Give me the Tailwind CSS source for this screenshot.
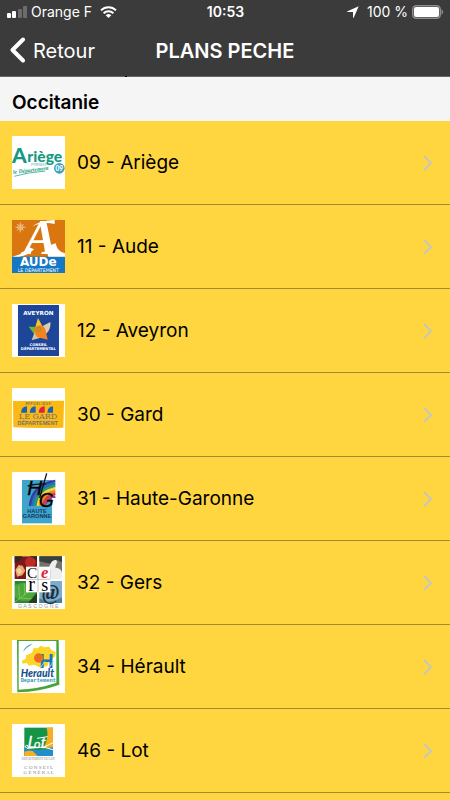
<!DOCTYPE html>
<html lang="fr">
<head>
    <meta charset="UTF-8">
    <meta name="viewport" content="width=device-width, initial-scale=1.0">
    <title>Plans Peche</title>
    <script src="https://cdn.jsdelivr.net/npm/@tailwindcss/browser@4"></script>
</head>
<body class="bg-[#ffd63f] font-['Inter',sans-serif] text-black">
    <div class="h-screen overflow-hidden">
        <header class="relative bg-[#3b3b3b] text-white border-b border-[#666]">
            <!-- Status bar -->
            <div class="grid grid-cols-[1fr_auto_1fr] items-center h-6 pl-[7px] pr-[6px] text-sm">
                <div class="flex items-center">
                    <svg class="w-5 h-3 mr-1" viewBox="0 0 20 12" fill="#fff">
                        <rect x="0" y="7" width="4" height="5" rx="1"/>
                        <rect x="5" y="5" width="4" height="7" rx="1"/>
                        <rect x="11" y="3" width="4" height="9" rx="1" fill="#6c6c6c"/>
                        <rect x="16" y="0" width="4" height="12" rx="1" fill="#6c6c6c"/>
                    </svg>
                    <span>Orange F</span>
                    <svg class="w-[17px] h-3 ml-2" viewBox="0 0 17 12" fill="none" stroke="#fff" stroke-width="2">
                        <path d="M1 4.4a10.6 10.6 0 0 1 15 0M3.6 7.2a6.9 6.9 0 0 1 9.8 0"/>
                        <path d="M8.5 12 5.7 9.3a4 4 0 0 1 5.6 0z" fill="#fff" stroke="none"/>
                    </svg>
                </div>
                <span class="font-semibold">10:53</span>
                <div class="flex items-center justify-end">
                    <svg class="w-3 h-3 mr-2" viewBox="0 0 12 12" fill="#fff"><path d="M11.7.3 6.8 11.5c-.2.5-.8.4-.8-.2V6H.7C.1 6 0 5.4.5 5.2z"/></svg>
                    <span>100 %</span>
                    <svg class="w-8 h-[14px] ml-1" viewBox="0 0 32 14">
                        <rect x=".75" y=".75" width="27.5" height="12.5" rx="3.5" fill="none" stroke="#8d8d8d" stroke-width="1.5"/>
                        <rect x="2" y="2" width="25" height="10" rx="2" fill="#fff"/>
                        <path d="M29.500 4.500c2.200.6 2.200 4.400 0 5z" fill="#8d8d8d"/>
                    </svg>
                </div>
            </div>
            <!-- Navigation bar -->
            <nav class="grid grid-cols-[1fr_auto_1fr] items-center h-[52px] px-[10px] text-xl">
                <a href="#" class="flex items-center gap-2">
                    <svg class="w-[15px] h-[26px]" viewBox="0 0 15 26" fill="none" stroke="#fff" stroke-width="4" stroke-linecap="round" stroke-linejoin="round"><path d="M13 2.5 2.500 13 13 23.500"/></svg>
                    <span class="pt-0.5">Retour</span>
                </a>
                <h1 class="pt-0.5 font-semibold">PLANS PECHE</h1>
            </nav>
            <span class="absolute left-[125px] -bottom-px w-0.5 h-px bg-black"></span>
        </header>

        <h2 class="flex items-center h-11 px-3 pt-2 bg-[#f5f5f5] text-[19px] font-semibold">Occitanie</h2>

        <ul id="list">
            <li>
                <a href="#" class="flex items-center h-[84px] pl-3 pr-[17px] border-b border-[#a38b33]">
                    <svg class="w-[53px] h-[53px] mr-3 bg-white" viewBox="0 0 159 159">
                        <g fill="#159a80" font-family="Lato" font-weight="900">
                            <text x="0" y="80" font-size="63">A</text>
                            <text x="46" y="77" font-size="47">riège</text>
                        </g>
                        <text x="57" y="89" font-family="Inter" font-size="9" fill="#4fa9bd">PYRENEES</text>
                        <g transform="rotate(-7 5 115)" fill="none" stroke="#159a80">
                            <text x="4" y="114" font-family="Liberation Serif" font-style="italic" font-weight="700" font-size="17" fill="#159a80" stroke="none">le Département</text>
                            <path d="M6 121q45-7 94-4" stroke-width="2"/>
                        </g>
                        <circle cx="142" cy="97" r="16" fill="#3fa2bc"/>
                        <text x="142" y="104" text-anchor="middle" font-family="Lato" font-weight="900" font-size="20" fill="#fff">09</text>
                    </svg>
                    <span class="flex-1 pt-0.5 text-[19px]">09 - Ariège</span>
                    <svg class="w-[10px] h-4" viewBox="0 0 10 16" fill="none" stroke="#c8c7bc" stroke-width="2"><path d="m1 1 7 7-7 7"/></svg>
                </a>
            </li>
            <li>
                <a href="#" class="flex items-center h-[84px] pl-3 pr-[17px] border-b border-[#a38b33]">
                    <svg class="w-[53px] h-[53px] mr-3" viewBox="0 0 159 159">
                        <rect width="159" height="159" fill="#da7610"/>
                        <rect y="110" width="159" height="49" fill="#1478c4"/>
                        <g fill="none" stroke="#f0bd86" stroke-width="3">
                            <path d="M25 7v30M10 22h30M15 12l20 20M35 12 15 32"/>
                            <circle cx="25" cy="22" r="8"/>
                        </g>
                        <text x="35" y="101" font-family="Liberation Serif" font-style="italic" font-weight="700" font-size="150" fill="#fff">A</text>
                        <!-- Brush tails around the initial -->
                        <path d="M0 110q34-7 52-28l14 6q-20 20-45 22z" fill="#fff"/>
                        <path d="M60 20Q85 0 128 0v12Q90 4 60 20z" fill="#fff"/>
                        <path d="M100 80l31-10q4 25 28 30v10h-50z" fill="#fff"/>
                        <text x="79" y="138" text-anchor="middle" font-family="DejaVu Sans" font-weight="700" font-size="36" fill="#fff">AUDe</text>
                        <text x="79" y="155" text-anchor="middle" font-family="DejaVu Sans" font-size="14" fill="#fff">LE DÉPARTEMENT</text>
                    </svg>
                    <span class="flex-1 pt-0.5 text-[19px]">11 - Aude</span>
                    <svg class="w-[10px] h-4" viewBox="0 0 10 16" fill="none" stroke="#c8c7bc" stroke-width="2"><path d="m1 1 7 7-7 7"/></svg>
                </a>
            </li>
            <li>
                <a href="#" class="flex items-center h-[84px] pl-3 pr-[17px] border-b border-[#a38b33]">
                    <svg class="w-[53px] h-[53px] mr-3 bg-white" viewBox="0 0 159 159">
                        <rect x="18" y="3" width="123" height="153" fill="#1d4598"/>
                        <path d="M68 76 78 42l16 30z" fill="#f8c52d"/>
                        <path d="M92 66l23-12q3 20-12 35z" fill="#d8cfb3"/>
                        <path d="M50 68l34 1-14 26z" fill="#74b72b"/>
                        <path d="M70 78l-11 31 34-10z" fill="#cfc5a5"/>
                        <path d="M70 70q16-13 29 2l8 35-32-8q-12-15-5-29z" fill="#f58220"/>
                        <circle cx="80" cy="76" r="6" fill="none" stroke="#8a9b2c" stroke-width="3"/>
                        <g fill="#fff" text-anchor="middle" font-family="DejaVu Sans" font-weight="700">
                            <text x="79" y="32" font-size="17">AVEYRON</text>
                            <text x="79" y="126" font-size="11">CONSEIL</text>
                            <text x="79" y="139" font-size="11">DÉPARTEMENTAL</text>
                        </g>
                    </svg>
                    <span class="flex-1 pt-0.5 text-[19px]">12 - Aveyron</span>
                    <svg class="w-[10px] h-4" viewBox="0 0 10 16" fill="none" stroke="#c8c7bc" stroke-width="2"><path d="m1 1 7 7-7 7"/></svg>
                </a>
            </li>
            <li>
                <a href="#" class="flex items-center h-[84px] pl-3 pr-[17px] border-b border-[#a38b33]">
                    <svg class="w-[53px] h-[53px] mr-3 bg-white" viewBox="0 0 159 159">
                        <path d="M3 39 156 38 154 119Q80 122 4 118z" fill="#fbb914"/>
                        <text x="78" y="50" text-anchor="middle" font-family="Inter" font-weight="700" font-size="9" fill="#806f55">R É P U B L I Q U E</text>
                        <path d="M27 74q2-19 18-19v19zM53 74q2-19 18-19v19zM106 74q2-19 17-19v19z" fill="#1764b4"/>
                        <path d="M80 74q2-19 18-19v19z" fill="#df2041"/>
                        <g fill="#6d7179" text-anchor="middle">
                            <text x="78" y="94" font-family="DejaVu Serif" font-size="24">LE GARD</text>
                            <text x="77" y="112" font-family="Liberation Sans" font-weight="700" font-size="16">DÉPARTEMENT</text>
                        </g>
                    </svg>
                    <span class="flex-1 pt-0.5 text-[19px]">30 - Gard</span>
                    <svg class="w-[10px] h-4" viewBox="0 0 10 16" fill="none" stroke="#c8c7bc" stroke-width="2"><path d="m1 1 7 7-7 7"/></svg>
                </a>
            </li>
            <li>
                <a href="#" class="flex items-center h-[84px] pl-3 pr-[17px] border-b border-[#a38b33]">
                    <svg class="w-[53px] h-[53px] mr-3 bg-white" viewBox="0 0 159 159">
                        <rect x="30" y="24" width="90" height="130" fill="#3da5cc"/>
                        <g fill="none" stroke-width="8">
                            <path d="M54 102Q60 39 130 27" stroke="#383b9b"/>
                            <path d="M62 102Q67 46 130 35" stroke="#246fc1"/>
                            <path d="M70 102Q75 53 130 42" stroke="#239d62"/>
                            <path d="M78 102Q82 59 130 50" stroke="#f7d534"/>
                            <path d="M86 102Q90 66 130 57" stroke="#f08327"/>
                            <path d="M94 102Q98 73 130 65" stroke="#e5352e"/>
                            <path d="M102 102Q106 80 130 74" stroke="#a4388e"/>
                        </g>
                        <path d="M120 78v24H98z" fill="#3da5cc"/>
                        <path d="M120 78h12v24h-12z" fill="#fff"/>
                        <!-- Brushed initials -->
                        <g font-family="Liberation Sans" font-style="italic" stroke="#111">
                            <text x="46" y="70" font-size="62">H</text>
                            <text x="80" y="104" font-size="58">G</text>
                        </g>
                        <path d="M47 42q29-8 54-6M104 4 83 78" fill="none" stroke="#111" stroke-width="4"/>
                        <g fill="#173463" text-anchor="middle" font-family="Liberation Sans" font-weight="700" font-size="17">
                            <text x="75" y="122">HAUTE</text>
                            <text x="75" y="139">GARONNE</text>
                        </g>
                    </svg>
                    <span class="flex-1 pt-0.5 text-[19px]">31 - Haute-Garonne</span>
                    <svg class="w-[10px] h-4" viewBox="0 0 10 16" fill="none" stroke="#c8c7bc" stroke-width="2"><path d="m1 1 7 7-7 7"/></svg>
                </a>
            </li>
            <li>
                <a href="#" class="flex items-center h-[84px] pl-3 pr-[17px] border-b border-[#a38b33]">
                    <svg class="w-[53px] h-[53px] mr-3 bg-white" viewBox="0 0 159 159">
                        <rect x="8" y="1" width="67" height="68" fill="#7c171c"/>
                        <path d="M8 1h23L22 16 8 20zM52 1h23v14z" fill="#302b1d"/>
                        <circle cx="55" cy="19" r="16" fill="#c02a25"/>
                        <path d="M10 41 20 27l12 2 8 15-9 14-16 4z" fill="#e9a768"/>
                        <path d="M13 41l10-6 8 12-10 9z" fill="#f2d2a3"/>
                        <rect x="82" y="1" width="68" height="68" fill="#77736a"/>
                        <path d="M82 1h68v18l-17-8-18 12-33-7z" fill="#38413e"/>
                        <path d="M112 31q8-21 19-19 8 3 1 14l-2 9q20 2 20 17v17h-35V42z" fill="#eee"/>
                        <rect x="8" y="75" width="67" height="66" fill="#2f8631"/>
                        <path d="M9 87q34-15 58 7 10 22-16 40Q18 137 9 122z" fill="#4da83b"/>
                        <path d="M8 139 68 93M23 127 20 90M38 117l-1-35M26 126l38 3" fill="none" stroke="#9bc969" stroke-width="2"/>
                        <path d="M48 141l27-29v29z" fill="#243d22"/>
                        <rect x="82" y="75" width="68" height="66" fill="#7dadc8"/>
                        <path d="M82 127q30 20 68-3v17H82z" fill="#477f9f"/>
                        <text x="90" y="130" font-family="Liberation Serif" font-style="italic" font-weight="700" font-size="62" fill="#1e303e">@</text>
                        <path d="M42 32h73v77H42z" fill="#fff"/>
                        <path d="M78 32v77M42 70h73" stroke="#aaa" stroke-width="2"/>
                        <g font-family="Liberation Serif" text-anchor="middle">
                            <text x="60" y="66" font-size="46">C</text>
                            <text x="98" y="65" font-size="50" font-style="italic" font-weight="700" fill="#df2635">e</text>
                            <text x="59" y="104" font-size="60">r</text>
                            <text x="98" y="104" font-size="54">s</text>
                        </g>
                        <text x="79" y="155" text-anchor="middle" font-family="Liberation Sans" font-size="16" fill="#999">G A S C O G N E</text>
                    </svg>
                    <span class="flex-1 pt-0.5 text-[19px]">32 - Gers</span>
                    <svg class="w-[10px] h-4" viewBox="0 0 10 16" fill="none" stroke="#c8c7bc" stroke-width="2"><path d="m1 1 7 7-7 7"/></svg>
                </a>
            </li>
            <li>
                <a href="#" class="flex items-center h-[84px] pl-3 pr-[17px] border-b border-[#a38b33]">
                    <svg class="w-[53px] h-[53px] mr-3 bg-white" viewBox="0 0 159 159">
                        <path d="M15 0h125l2 134q-58 21-126 23z" fill="#48a438"/>
                        <path d="M20 3h113v125q-55 19-113 21z" fill="#fff"/>
                        <path d="M33 35q8-20 29-24-19 11-29 24z" fill="#319ba2"/>
                        <path d="M29 63l12-7 2-10 17-8 5-14 12 1 9-8 11 5 15-2 7 11 12 6-2 13-16 10-7 18-24 4-16-8-15 3-7-8-12 2z" fill="#fbd62a"/>
                        <text x="82" y="84" font-family="Liberation Sans" font-weight="700" font-size="60" fill="#1677b8">H</text>
                        <path d="M84 86l14-22M110 86l14-22" stroke="#9cd2e6" stroke-width="3"/>
                        <circle cx="80" cy="54" r="14" fill="#ef6b21"/>
                        <text x="26" y="111" font-family="Lato" font-weight="900" font-size="31" font-style="italic" fill="#19508c">Herault</text>
                        <text x="26" y="126" font-family="Liberation Mono" font-weight="700" font-size="16" fill="#2494b5">Departement</text>
                    </svg>
                    <span class="flex-1 pt-0.5 text-[19px]">34 - Hérault</span>
                    <svg class="w-[10px] h-4" viewBox="0 0 10 16" fill="none" stroke="#c8c7bc" stroke-width="2"><path d="m1 1 7 7-7 7"/></svg>
                </a>
            </li>
            <li>
                <a href="#" class="flex items-center h-[84px] pl-3 pr-[17px] border-b border-[#a38b33]">
                    <svg class="w-[53px] h-[53px] mr-3 bg-white" viewBox="0 0 159 159">
                        <rect x="37" y="11" width="86" height="85" fill="#159447"/>
                        <path d="M104 11h19v60H94q18-28 10-60z" fill="#f8ae20"/>
                        <path d="M37 71q43 14 86-1v26H37z" fill="#218dc9"/>
                        <path d="M37 83q15-5 25-2l15 15H37z" fill="#f8ae20"/>
                        <g fill="#fff" stroke="#fff" font-family="Liberation Sans" font-style="italic">
                            <text x="47" y="71" font-size="48">L</text>
                            <text x="66" y="71" font-size="34">o</text>
                            <text x="86" y="71" font-size="46">t</text>
                        </g>
                        <path d="M39 68q5-9 10-2-5 10-10 2zM45 73q32-4 50-3l28-14M75 43l32-5M93 69l30 8" fill="none" stroke="#fff" stroke-width="3"/>
                        <g fill="#858585" text-anchor="middle" font-family="Liberation Serif">
                            <text x="79" y="109" font-size="9">DÉPARTEMENT DU LOT</text>
                            <text x="80" y="134" font-size="15">C O N S E I L</text>
                            <text x="80" y="150" font-size="15">G É N É R A L</text>
                        </g>
                    </svg>
                    <span class="flex-1 pt-0.5 text-[19px]">46 - Lot</span>
                    <svg class="w-[10px] h-4" viewBox="0 0 10 16" fill="none" stroke="#c8c7bc" stroke-width="2"><path d="m1 1 7 7-7 7"/></svg>
                </a>
            </li>
        </ul>
    </div>
</body>
</html>
